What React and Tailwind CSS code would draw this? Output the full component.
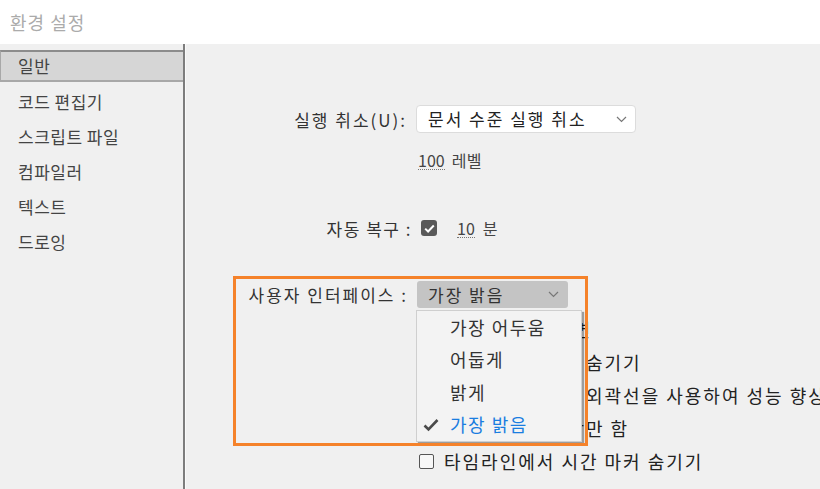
import React from 'react';

const FONT = { fontFamily: '"Noto Sans CJK KR", "Noto Sans", sans-serif' };

// 사이드바 메뉴
const menu = ['일반', '코드 편집기', '스크립트 파일', '컴파일러', '텍스트', '드로잉'];

// 체크박스 행 (일부는 드롭다운에 가려짐)
const options = [
  { label: '시작할 때 홈 화면', checked: false },
  { label: '패스트보드 영역 숨기기', checked: false },
  { label: '그리는 동안에는 외곽선을 사용하여 성능 향상', checked: false },
  { label: '선택 영역의 윤곽만 함', checked: false },
  { label: '타임라인에서 시간 마커 숨기기', checked: false },
];

const themes = ['가장 어두움', '어둡게', '밝게', '가장 밝음'];

function Chevron() {
  return (
    <svg width="11" height="7" viewBox="0 0 11 7" className="shrink-0">
      <path d="M1 1l4.5 4.5L10 1" fill="none" stroke="#777" strokeWidth="1.2" />
    </svg>
  );
}

function CheckBox({ checked }) {
  if (checked) {
    return (
      <span className="w-[16px] h-[16px] rounded-[3px] bg-[#595959] flex items-center justify-center shrink-0">
        <svg width="11" height="9" viewBox="0 0 11 9">
          <path d="M1.2 4.6l2.9 2.9L9.8 1.5" fill="none" stroke="#fff" strokeWidth="2" />
        </svg>
      </span>
    );
  }
  return <span className="w-[15px] h-[15px] rounded-[2px] border-[1.5px] border-[#555] bg-[#f7f7f7] shrink-0" />;
}

export default function App() {
  return (
    <div className="w-[820px] h-[489px] overflow-hidden bg-[#f0f0f0] text-[#333]" style={FONT}>
      {/* 타이틀 바 */}
      <div className="h-[44px] bg-white pl-[10px] flex items-center text-[18px] tracking-[1px] text-[#ababab]">
        환경 설정
      </div>

      <div className="flex h-[445px]">
        {/* 사이드바 */}
        <aside className="w-[185px] shrink-0 border-r-2 border-[#7d7d7d] pt-[6px]">
          {menu.map((item, i) =>
            i === 0 ? (
              <div
                key={item}
                className="h-[32px] mb-[2px] bg-[#d6d6d6] border-t-2 border-b-2 border-l border-t-[#8c8c8c] border-b-[#a8a8a8] border-l-[#a8a8a8] pl-[17px] flex items-center text-[17px] tracking-[0.5px] text-[#444]"
              >
                {item}
              </div>
            ) : (
              <div key={item} className="h-[35px] pl-[18px] flex items-center text-[17px] tracking-[0.5px] text-[#444]">
                {item}
              </div>
            )
          )}
        </aside>

        {/* 본문 */}
        <main className="relative flex-1 border-l border-[#fafafa]">
          <div className="mt-[61px] h-[28px] flex items-center">
            <span className="w-[221px] text-right text-[17px] tracking-[2px] leading-none">실행 취소(U):</span>
            <div className="ml-[9px] w-[220px] h-[28px] bg-white border border-[#dcdcdc] rounded-[4px] pl-[11px] pr-[8px] flex items-center justify-between text-[17px] tracking-[2px] text-[#222]">
              <span>문서 수준 실행 취소</span>
              <Chevron />
            </div>
          </div>

          <div className="mt-[13px] h-[28px] flex items-center pl-[232px] text-[16px] text-[#444]">
            <span className="border-b border-dotted border-[#777] leading-[18px]">100</span>
            <span className="ml-[7px] tracking-[0.5px]">레벨</span>
          </div>

          <div className="mt-[40px] h-[28px] flex items-center">
            <span className="w-[226px] text-right text-[17px] tracking-[1.5px] leading-none">자동 복구 :</span>
            <span className="ml-[9px]">
              <CheckBox checked />
            </span>
            <span className="ml-[20px] text-[16px] text-[#444] border-b border-dotted border-[#777] leading-[18px]">10</span>
            <span className="ml-[8px] text-[16px] text-[#444]">분</span>
          </div>

          <div className="mt-[39px] h-[27px] flex items-center">
            <span className="w-[222px] text-right text-[17px] tracking-[2px] leading-none">사용자 인터페이스 :</span>
            <div className="ml-[9px] w-[151px] h-[27px] bg-[#c4c4c4] rounded-[3px] pl-[11px] pr-[9px] flex items-center justify-between text-[17px] tracking-[2px] text-[#333]">
              <span>가장 밝음</span>
              <Chevron />
            </div>
          </div>

          <div className="mt-[5px]">
            {options.map((o) => (
              <div key={o.label} className="h-[33px] flex items-center pl-[233px] whitespace-nowrap">
                <CheckBox checked={o.checked} />
                <span className="ml-[10px] text-[18px] tracking-[2px] text-[#222]">{o.label}</span>
              </div>
            ))}
          </div>

          {/* 테마 드롭다운 메뉴 */}
          <div className="absolute left-[230px] top-[266px] w-[166px] bg-[#f3f3f3] border border-[#cfcfcf] shadow-[2px_2px_1px_rgba(0,0,0,0.35)]">
            {themes.map((t, i) => (
              <div key={t} className="h-[32.5px] flex items-center relative">
                {i === 3 && (
                  <svg width="16" height="14" viewBox="0 0 16 14" className="absolute left-[6px]">
                    <path d="M1.5 7.5l4 4L14.5 2" fill="none" stroke="#4a4a4a" strokeWidth="2.6" />
                  </svg>
                )}
                <span
                  className={
                    'pl-[33px] text-[18px] tracking-[1.5px] ' + (i === 3 ? 'text-[#1a7de0]' : 'text-[#333]')
                  }
                >
                  {t}
                </span>
              </div>
            ))}
          </div>

          {/* 강조 표시 사각형 */}
          <div className="absolute left-[47px] top-[232px] w-[355px] h-[170px] border-[3px] border-[#f5822a] pointer-events-none" />
        </main>
      </div>
    </div>
  );
}
